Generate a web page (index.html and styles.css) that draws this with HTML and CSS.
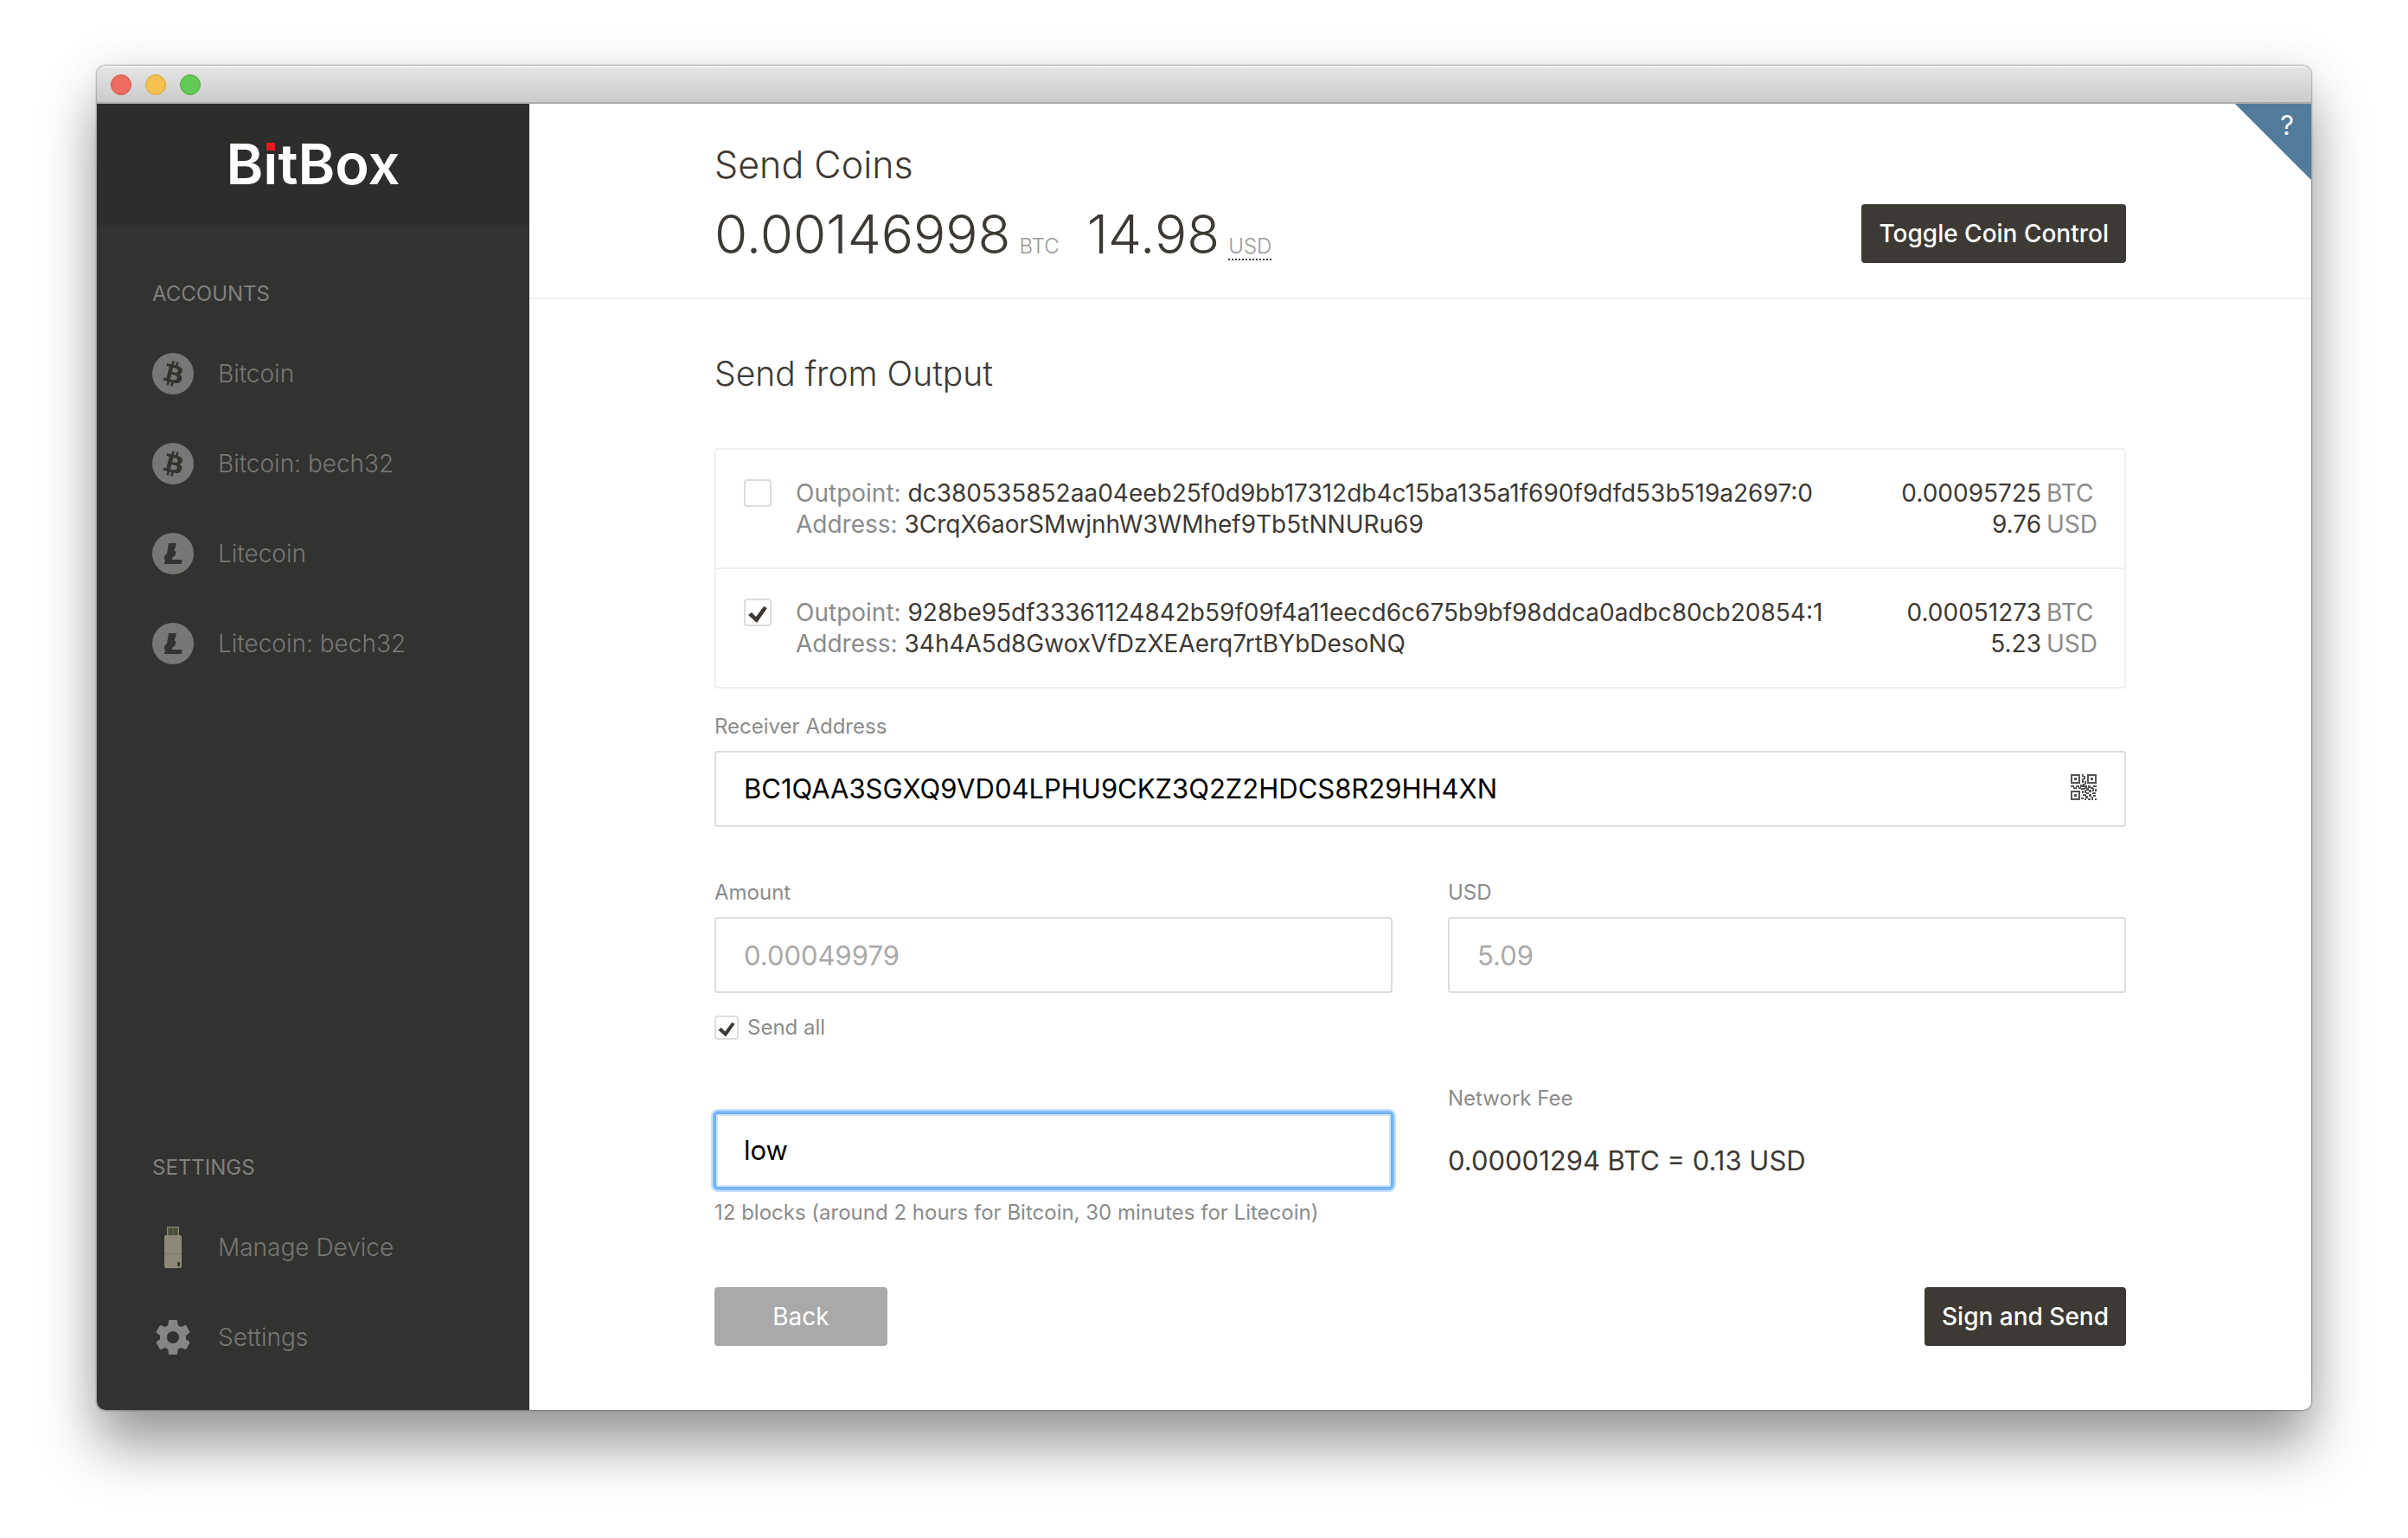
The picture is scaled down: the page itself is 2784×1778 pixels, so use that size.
FILE: index.html
```html
<!DOCTYPE html>
<html lang="en">
<head>
<meta charset="utf-8">
<title>BitBox - Send Coins</title>
<link rel="stylesheet" href="styles.css">
</head>
<body>
<svg class="sprite" aria-hidden="true">
  <symbol id="icon-btc" viewBox="0 0 32 32">
    <circle cx="16" cy="16" r="16" fill="currentColor"/>
    <path class="cutout" fill-rule="evenodd" d="M23.189 14.02c.314-2.096-1.283-3.223-3.465-3.975l.708-2.84-1.728-.43-.69 2.765c-.454-.114-.92-.22-1.385-.326l.695-2.783L15.596 6l-.708 2.839c-.376-.086-.746-.17-1.104-.26l.002-.009-2.384-.595-.46 1.846s1.283.294 1.256.312c.7.175.826.638.805 1.006l-.806 3.235c.048.012.11.03.18.057l-.183-.045-1.13 4.532c-.086.212-.303.531-.793.41.018.025-1.256-.313-1.256-.313l-.858 1.978 2.25.561c.418.105.828.215 1.231.318l-.715 2.872 1.727.43.708-2.84c.472.127.93.245 1.378.357l-.706 2.828 1.728.43.715-2.866c2.948.558 5.164.333 6.097-2.333.752-2.146-.037-3.385-1.588-4.192 1.13-.26 1.98-1.003 2.207-2.538zm-3.95 5.538c-.533 2.147-4.148.986-5.32.695l.95-3.805c1.172.293 4.929.872 4.37 3.11zm.535-5.569c-.487 1.953-3.495.96-4.47.717l.86-3.45c.975.243 4.118.696 3.61 2.733z"/>
  </symbol>
  <symbol id="icon-ltc" viewBox="0 0 32 32">
    <circle cx="16" cy="16" r="16" fill="currentColor"/>
    <path class="cutout" d="M12.7 8h6l-1.8 6.400 1.500-.6-.8 3.800-1.800 1.100-.7 2h8l-.7 3.300H9.300l.9-4-1.300.7.9-3.600 1.500-.9z"/>
  </symbol>
</svg>

<div class="window">
  <div class="titlebar">
    <span class="light light-close"></span>
    <span class="light light-minimize"></span>
    <span class="light light-zoom"></span>
  </div>

  <div class="app">
    <nav class="sidebar">
      <div class="brand">B<span class="brand-i">i</span>tBox</div>
      <div class="nav-group">
        <h2 class="nav-title">ACCOUNTS</h2>
        <a class="nav-link" href="#bitcoin"><svg class="nav-icon"><use href="#icon-btc"/></svg>Bitcoin</a>
        <a class="nav-link" href="#bitcoin-bech32"><svg class="nav-icon"><use href="#icon-btc"/></svg>Bitcoin: bech32</a>
        <a class="nav-link" href="#litecoin"><svg class="nav-icon"><use href="#icon-ltc"/></svg>Litecoin</a>
        <a class="nav-link" href="#litecoin-bech32"><svg class="nav-icon"><use href="#icon-ltc"/></svg>Litecoin: bech32</a>
      </div>
      <div class="nav-group nav-group-bottom">
        <h2 class="nav-title">SETTINGS</h2>
        <a class="nav-link" href="#device">
          <svg class="nav-icon" viewBox="0 0 48 48">
            <path fill="#8a897f" d="M17 0h14v11H17z"/>
            <path fill="#5f5d45" d="M18 1h12v9H18z"/>
            <path stroke="#35402f" d="M20.500 2v8M22.500 2v8M25.500 2v8M27.500 2v8"/>
            <rect x="14" y="10" width="20" height="38" rx="2" fill="#8d8978"/>
            <path stroke="#77766c" d="M14 31.500h20"/>
            <rect x="29" y="41" width="3" height="5" rx="1" fill="#32312f"/>
          </svg>Manage Device</a>
        <a class="nav-link" href="#settings">
          <svg class="nav-icon nav-icon-gear" viewBox="0 0 24 24"><path fill="currentColor" d="M19.43 12.98c.04-.32.07-.64.07-.98s-.03-.66-.07-.98l2.11-1.65c.19-.15.24-.42.12-.64l-2-3.46c-.12-.22-.39-.3-.61-.22l-2.49 1c-.52-.4-1.08-.73-1.69-.98l-.38-2.65C14.46 2.18 14.25 2 14 2h-4c-.25 0-.46.18-.49.42l-.38 2.65c-.61.25-1.17.59-1.69.98l-2.49-1c-.23-.09-.49 0-.61.22l-2 3.46c-.13.22-.07.49.12.64l2.11 1.65c-.04.32-.07.65-.07.98s.03.66.07.98l-2.11 1.65c-.19.15-.24.42-.12.64l2 3.46c.12.22.39.3.61.22l2.49-1c.52.4 1.08.73 1.69.98l.38 2.65c.03.24.24.42.49.42h4c.25 0 .46-.18.49-.42l.38-2.65c.61-.25 1.17-.59 1.69-.98l2.49 1c.23.09.49 0 .61-.22l2-3.46c.12-.22.07-.49-.12-.64l-2.11-1.65zM12 15.500c-1.930 0-3.500-1.570-3.500-3.500s1.570-3.500 3.500-3.500 3.500 1.570 3.500 3.500-1.570 3.500-3.500 3.500z"/></svg>Settings</a>
      </div>
    </nav>

    <main class="main">
      <button class="guide" type="button" aria-label="Guide"><span class="guide-mark">?</span></button>

      <header class="header">
        <div class="container header-row">
          <div>
            <h1 class="page-title">Send Coins</h1>
            <p class="balance">
              <span>0.00146998<span class="balance-unit">BTC</span></span>
              <span>14.98<span class="balance-unit balance-fiat">USD</span></span>
            </p>
          </div>
          <button class="button button-primary" type="button">Toggle Coin Control</button>
        </div>
      </header>

      <form class="container form">
        <h2 class="section-title">Send from Output</h2>
        <ul class="outputs">
          <li class="output">
            <input class="checkbox" type="checkbox" id="utxo-1">
            <label class="output-info" for="utxo-1">
              <span><span class="muted">Outpoint:</span> dc380535852aa04eeb25f0d9bb17312db4c15ba135a1f690f9dfd53b519a2697:0</span>
              <span><span class="muted">Address:</span> 3CrqX6aorSMwjnhW3WMhef9Tb5tNNURu69</span>
            </label>
            <div class="output-amount">
              <span>0.00095725</span><span class="muted unit">BTC</span>
              <span>9.76</span><span class="muted unit">USD</span>
            </div>
          </li>
          <li class="output">
            <input class="checkbox" type="checkbox" id="utxo-2" checked>
            <label class="output-info" for="utxo-2">
              <span><span class="muted">Outpoint:</span> 928be95df33361124842b59f09f4a11eecd6c675b9bf98ddca0adbc80cb20854:1</span>
              <span><span class="muted">Address:</span> 34h4A5d8GwoxVfDzXEAerq7rtBYbDesoNQ</span>
            </label>
            <div class="output-amount">
              <span>0.00051273</span><span class="muted unit">BTC</span>
              <span>5.23</span><span class="muted unit">USD</span>
            </div>
          </li>
        </ul>

        <div class="field">
          <label class="label" for="receiver">Receiver Address</label>
          <div class="control qr-control">
            <input class="qr-input" id="receiver" type="text" value="BC1QAA3SGXQ9VD04LPHU9CKZ3Q2Z2HDCS8R29HH4XN">
            <button class="qr-button" type="button" aria-label="Scan QR code">
              <svg class="qr-icon" viewBox="0 0 30 30" fill="#555">
                <path fill-rule="evenodd" d="M0 0h11v11H0zM2 2v7h7V2zM19 0h11v11H19zM21 2v7h7V2zM0 19h11v11H0zM2 21v7h7v-7z"/>
                <path d="M4 4h3v3H4zM23 4h3v3h-3zM4 23h3v3H4zM13 0h2v3h-2zM15 2h2v4h-2zM13 5h2v5h-2zM16 8h2v4h-2zM0 13h4v2H0zM3 15h4v2H3zM6 13h4v2H6zM9 15h3v2H9zM11 12h3v3h-3zM14 11h2v4h-2zM12 16h4v2h-4zM16 13h3v4h-3zM18 16h3v3h-3zM20 13h3v3h-3zM23 15h3v2h-3zM26 13h4v2h-4zM25 16h2v4h-2zM28 17h2v3h-2zM21 18h3v3h-3zM13 19h2v3h-2zM16 18h2v4h-2zM18 21h3v2h-3zM14 23h4v2h-4zM12 27h3v2h-3zM17 25h3v3h-3zM16 28h2v2h-2zM21 23h3v3h-3zM25 21h4v2h-4zM24 26h2v4h-2zM20 28h3v2h-3zM26 24h3v2h-3zM28 28h2v2h-2z"/>
              </svg>
            </button>
          </div>
        </div>

        <div class="columns amounts">
          <div class="field">
            <label class="label" for="amount">Amount</label>
            <input class="control" id="amount" type="text" value="0.00049979" disabled>
          </div>
          <div class="field">
            <label class="label" for="fiat">USD</label>
            <input class="control" id="fiat" type="text" value="5.09" disabled>
          </div>
        </div>
        <label class="send-all"><input class="checkbox checkbox-small" type="checkbox" checked>Send all</label>

        <div class="columns fees">
          <div class="fee-target">
            <select class="control is-focused" aria-label="Fee target">
              <option>low</option>
            </select>
            <p class="help">12 blocks (around 2 hours for Bitcoin, 30 minutes for Litecoin)</p>
          </div>
          <div>
            <p class="label">Network Fee</p>
            <p class="fee-value">0.00001294 BTC = 0.13 USD</p>
          </div>
        </div>

        <div class="actions">
          <button class="button button-secondary" type="button">Back</button>
          <button class="button button-primary" type="submit">Sign and Send</button>
        </div>
      </form>
    </main>
  </div>
</div>
</body>
</html>
```

FILE: styles.css
```css
*,
*::before,
*::after {
  box-sizing: border-box;
}

body {
  margin: 0;
  min-height: 100vh;
  padding: 76px 112px 148px;
  display: flex;
  background: #fff;
  color: #3d3934;
  font-family: Inter, "Liberation Sans", sans-serif;
  font-size: 28px;
  line-height: 36px;
}

h1,
h2,
p,
ul {
  margin: 0;
  padding: 0;
  font-weight: 400;
}

button,
input,
select {
  margin: 0;
  font: inherit;
}

.sprite {
  position: absolute;
  width: 0;
  height: 0;
}

.muted {
  color: #8b8b8b;
}

/* Window chrome */

.window {
  flex: 1;
  display: flex;
  flex-direction: column;
  border-radius: 10px;
  overflow: hidden;
  background: #fff;
  box-shadow: 0 0 2px 1px rgba(0, 0, 0, 0.3), 0 42px 64px rgba(0, 0, 0, 0.38), 0 0 60px rgba(0, 0, 0, 0.08);
}

.titlebar {
  display: flex;
  align-items: center;
  gap: 16px;
  height: 44px;
  padding: 2px 16px 0;
  border-bottom: 2px solid #ababab;
  background: linear-gradient(#e6e6e6, #cbcbcb);
  box-shadow: inset 0 2px 0 #f2f2f2;
}

.light {
  width: 24px;
  height: 24px;
  border: 1px solid;
  border-radius: 50%;
}

.light-close {
  background: #ed6b5f;
  border-color: #d4564b;
}

.light-minimize {
  background: #f5c04f;
  border-color: #d9a33c;
}

.light-zoom {
  background: #62c856;
  border-color: #4cab3f;
}

.app {
  flex: 1;
  display: flex;
}

/* Sidebar */

.sidebar {
  flex: 0 0 500px;
  display: flex;
  flex-direction: column;
  background: #323230;
  color: #777775;
}

.brand {
  height: 140px;
  background: #2d2d2b;
  color: #fff;
  font-size: 65px;
  font-weight: 600;
  line-height: 140px;
  text-align: center;
}

/* The stem stays white; the dot is replaced by a red square. */
.brand-i {
  position: relative;
  background: linear-gradient(transparent 27px, #fff 27px);
  -webkit-background-clip: text;
  background-clip: text;
  color: transparent;
}

.brand-i::before {
  content: "";
  position: absolute;
  top: 15px;
  left: 50%;
  width: 10px;
  height: 9px;
  margin-left: -5px;
  background: #e11b22;
}

.nav-group {
  padding: 64px 64px 0;
}

.nav-group-bottom {
  margin-top: auto;
  padding: 0 64px 32px;
}

.nav-title {
  margin-bottom: 24px;
  font-size: 24px;
  line-height: 32px;
  color: #80807e;
}

.nav-link {
  display: flex;
  align-items: center;
  gap: 28px;
  height: 104px;
  color: inherit;
  font-weight: 300;
  text-decoration: none;
}

.nav-icon {
  width: 48px;
  height: 48px;
}

.nav-icon-gear {
  color: #858585;
}

.cutout {
  fill: #323230;
}

/* Main */

.main {
  position: relative;
  flex: 1;
  background: #fff;
}

.container {
  max-width: 1632px;
  margin: 0 auto;
}

.guide {
  position: absolute;
  top: 0;
  right: 0;
  width: 88px;
  height: 88px;
  padding: 8px 20px;
  border: 0;
  background: #507b9b;
  clip-path: polygon(0 0, 100% 0, 100% 100%);
  color: #fff;
  font-size: 31px;
  line-height: 34px;
}

.guide-mark {
  display: block;
  height: 100%;
  text-align: right;
}

.header {
  padding: 40px 0;
  border-bottom: 2px solid #f0f0f0;
}

.header-row {
  display: flex;
  align-items: flex-end;
  justify-content: space-between;
}

.page-title {
  margin-bottom: 16px;
  font-size: 43px;
  font-weight: 300;
  line-height: 60px;
}

.balance {
  display: flex;
  gap: 32px;
  height: 68px;
  font-size: 62px;
  font-weight: 300;
  line-height: 70px;
}

.balance-unit {
  margin-left: 10px;
  color: #999;
  font-size: 24px;
  line-height: 24px;
}

.balance-fiat {
  border-bottom: 2px dotted #3d3934;
}

.button {
  height: 68px;
  min-width: 200px;
  padding: 0 20px;
  border: 0;
  border-radius: 4px;
  color: #fff;
}

.button-primary {
  background: #3d3934;
  font-weight: 500;
}

.button-secondary {
  background: #a9a9a9;
}

/* Form */

.form {
  padding: 58px 0 74px;
}

.section-title {
  margin-bottom: 58px;
  font-size: 39px;
  font-weight: 300;
  line-height: 56px;
}

.outputs {
  border: 2px solid #f0f0f0;
  border-radius: 4px;
  list-style: none;
}

.output {
  display: flex;
  align-items: flex-start;
  gap: 28px;
  padding: 32px;
}

.output + .output {
  border-top: 2px solid #f0f0f0;
}

.output .checkbox {
  margin-top: 2px;
}

.output-info {
  flex: 1;
  display: flex;
  flex-direction: column;
}

.output-amount {
  display: grid;
  grid-template-columns: auto 58px;
  column-gap: 6px;
  text-align: right;
}

.unit {
  text-align: left;
}

.checkbox {
  flex: none;
  width: 32px;
  height: 32px;
  appearance: none;
  border: 2px solid #ddd;
  border-radius: 4px;
  background: #fff;
}

.checkbox:checked {
  background: #fff url("data:image/svg+xml,%3Csvg xmlns='http://www.w3.org/2000/svg' viewBox='0 0 32 32'%3E%3Cpath fill='%233d3934' d='M5 19l4-3 5 5 9-12 4 2-12 17z'/%3E%3C/svg%3E") center / 100% border-box;
}

.checkbox-small {
  width: 28px;
  height: 28px;
}

.field {
  margin-top: 28px;
}

.label {
  display: block;
  margin-bottom: 12px;
  color: #8b8b8b;
  font-size: 24px;
  line-height: 32px;
}

.control {
  display: block;
  width: 100%;
  height: 88px;
  padding: 0 32px;
  appearance: none;
  border: 2px solid #ddd;
  border-radius: 4px;
  background: #fff;
  color: #000;
  font-size: 31px;
}

.control:disabled {
  color: #aaa;
}

.is-focused {
  border-color: #6fb1f5;
  outline: 0;
  box-shadow: 0 0 0 2px #82bdfa, 0 0 0 4px #c9e2fd, inset 0 0 0 2px #cde4ff;
}

.qr-control {
  display: flex;
  align-items: center;
}

.qr-input {
  flex: 1;
  padding: 0;
  border: 0;
  outline: 0;
  background: none;
  color: inherit;
}

.qr-button {
  display: flex;
  padding: 0 0 4px;
  border: 0;
  background: none;
}

.qr-icon {
  width: 30px;
  height: 30px;
}

.columns {
  display: grid;
  grid-template-columns: 1fr 1fr;
  column-gap: 64px;
}

.amounts {
  margin-top: 32px;
}

.send-all {
  display: flex;
  align-items: center;
  gap: 10px;
  width: fit-content;
  height: 28px;
  margin-top: 26px;
  color: #8b8b8b;
  font-size: 24px;
}

.fees {
  margin-top: 52px;
}

.fee-target {
  padding-top: 32px;
}

.help {
  margin-top: 12px;
  color: #8b8b8b;
  font-size: 24px;
  line-height: 32px;
}

.fee-value {
  margin-top: 32px;
  font-size: 31px;
  line-height: 48px;
}

.actions {
  display: flex;
  justify-content: space-between;
  margin-top: 70px;
}
```
